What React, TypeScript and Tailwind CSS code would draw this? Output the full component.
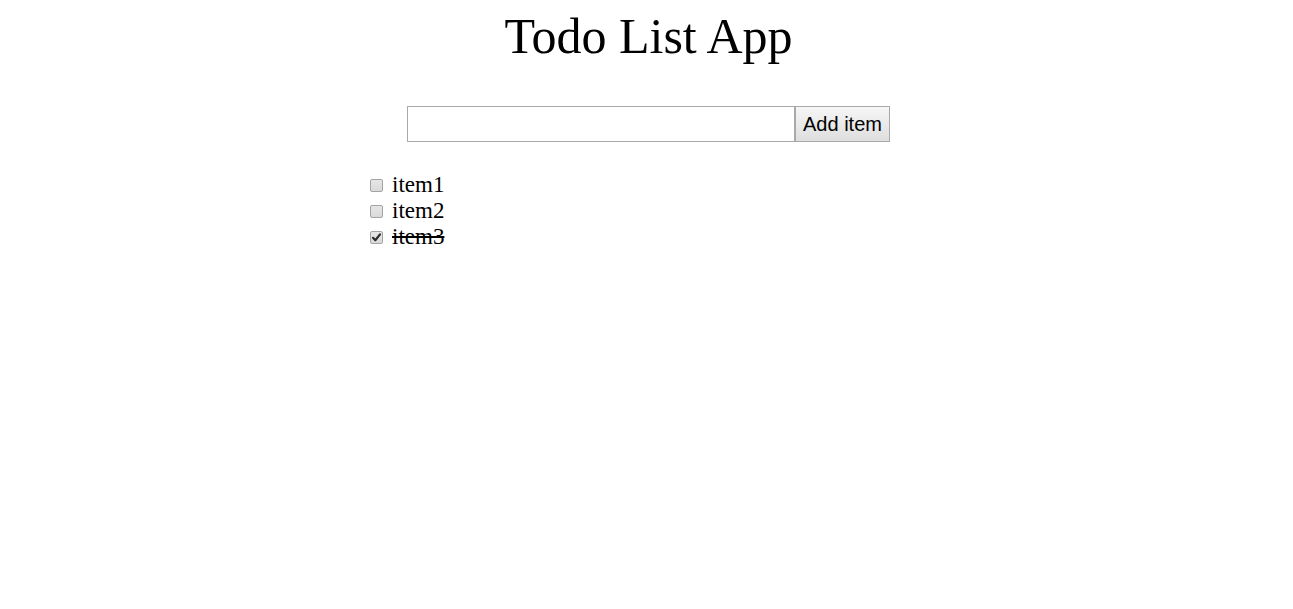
import React, { useState } from "react";

export default function App() {
  const [items, setItems] = useState([
    { text: "item1", done: false },
    { text: "item2", done: false },
    { text: "item3", done: true },
  ]);
  const [value, setValue] = useState("");
  return (
    <div className="min-h-[609px] bg-white text-black" style={{ fontFamily: '"Liberation Serif", serif' }}>
      <h1 className="pt-[4px] text-center text-[50px] leading-[64px] ml-[4px]">Todo List App</h1>
      <div className="mt-[38px] flex justify-center ml-[4px]">
        <input
          value={value}
          onChange={(e) => setValue(e.target.value)}
          className="h-[36px] w-[388px] border border-[#a9a9a9] bg-white px-1 outline-none"
        />
        <button
          onClick={() => {
            if (value) setItems([...items, { text: value, done: false }]);
            setValue("");
          }}
          className="h-[36px] w-[95px] border border-[#a9a9a9] bg-gradient-to-b from-[#f6f6f6] to-[#dedede] text-[20px] text-black"
          style={{ fontFamily: '"Liberation Sans", Arial, sans-serif' }}
        >
          Add item
        </button>
      </div>
      <ul className="mt-[30px] pl-[370px]">
        {items.map((it, i) => (
          <li key={i} className="flex h-[26px] items-center text-[23px]">
            <label className="relative flex h-[13px] w-[13px] cursor-pointer items-center justify-center">
              <input
                type="checkbox"
                checked={it.done}
                onChange={() => setItems(items.map((x, j) => (j === i ? { ...x, done: !x.done } : x)))}
                className="m-0 h-[13px] w-[13px] appearance-none rounded-[2px] border border-[#a3a3a3] bg-gradient-to-b from-[#e6e6e6] to-[#dadada]"
              />
              {it.done && (
                <svg viewBox="0 0 13 13" className="pointer-events-none absolute inset-0 h-[13px] w-[13px]">
                  <path d="M3 6.8 L5.3 9.2 L10 3.4" fill="none" stroke="#2b2b2b" strokeWidth="2.2" strokeLinecap="round" strokeLinejoin="round" />
                </svg>
              )}
            </label>
            <span className={"ml-[9px] " + (it.done ? "line-through" : "")}>{it.text}</span>
          </li>
        ))}
      </ul>
    </div>
  );
}
